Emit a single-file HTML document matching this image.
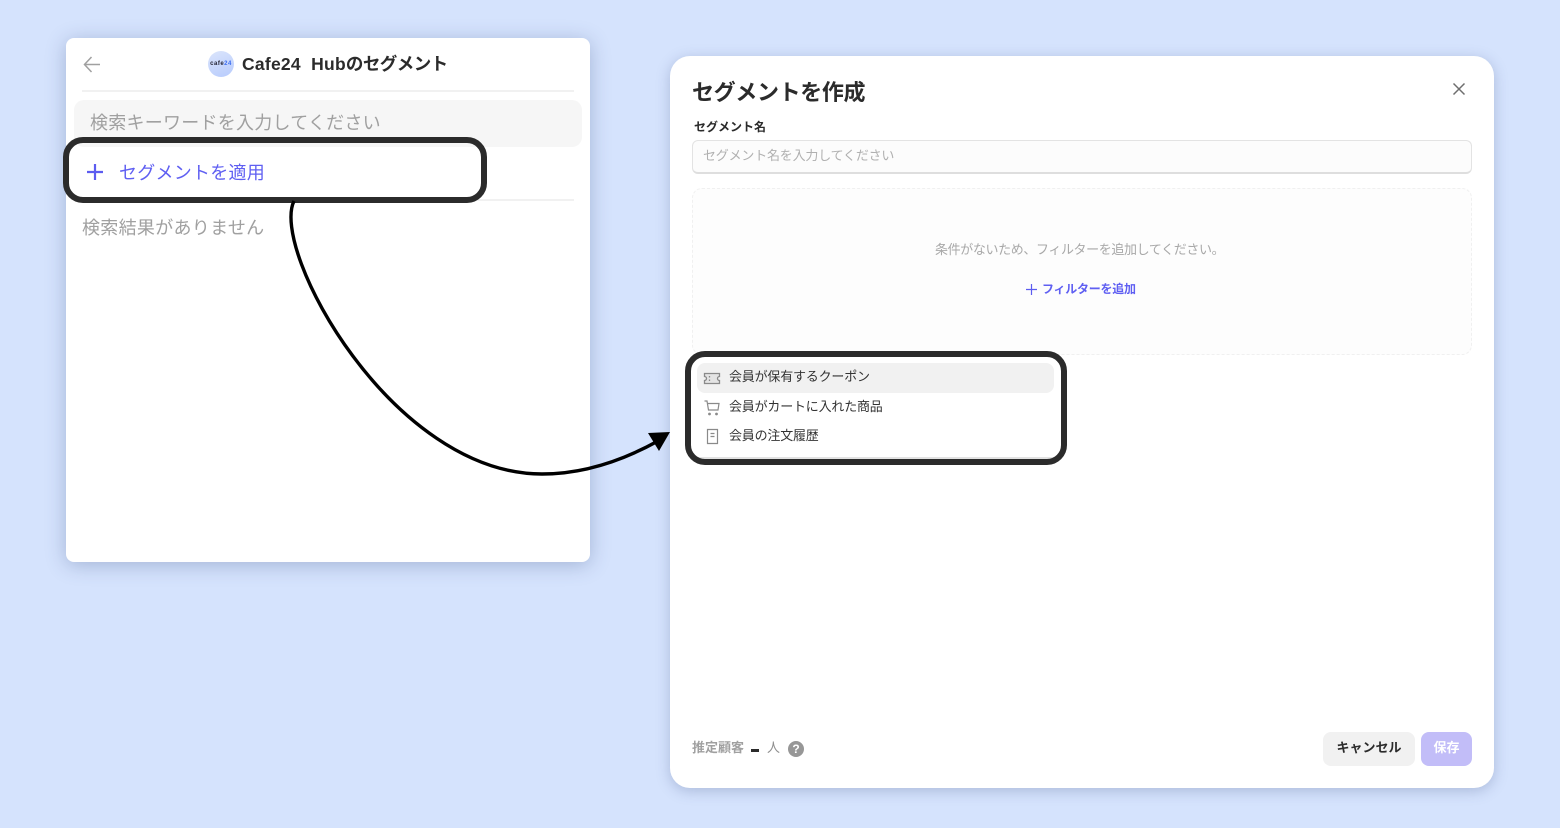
<!DOCTYPE html>
<html lang="ja"><head><meta charset="utf-8"><title>セグメント</title>
<style>
html,body{margin:0;padding:0}
body{width:1560px;height:828px;background:#d5e3fd;position:relative;overflow:hidden;font-family:"Liberation Sans","Noto Sans CJK JP",sans-serif}
.a{position:absolute;white-space:nowrap}
.card{position:absolute;background:#fff}
.hl{position:absolute;border:6px solid #2b2b2b;box-sizing:border-box}
svg{position:absolute;overflow:visible}
</style></head><body>
<div class="card" style="left:66px;top:38px;width:524px;height:524px;border-radius:8px;box-shadow:0 3px 20px rgba(60,80,130,.32)"></div>
<svg style="left:82px;top:54px" width="20" height="20" viewBox="0 0 20 20" fill="none" stroke="#a0a0a0" stroke-width="1.500"><path d="M18 10.500H2.500M9.500 3L2.500 10.500L9.500 18"/></svg>
<div class="a" style="left:208px;top:51px;width:26px;height:26px;border-radius:50%;background:linear-gradient(160deg,#dbe5fb,#b7cbfd)"></div>
<div class="a" style="left:209px;top:60px;width:24px;text-align:center;font-size:6px;line-height:8px;font-weight:700;color:#223;letter-spacing:.5px">cafe<span style="color:#3d6ef0">24</span></div>
<div class="a" style="left:242px;top:51px;font-size:17.500px;line-height:26px;font-weight:700;color:#2b2b2b"><span style="letter-spacing:.25px">Cafe24&nbsp; Hub</span><span style="letter-spacing:-.55px">のセグメント</span></div>
<div class="a" style="left:82px;top:90px;width:492px;height:2px;background:#f1f1f1"></div>
<div class="a" style="left:74px;top:100px;width:508px;height:47px;border-radius:10px;background:#f6f6f6"></div>
<div class="a" style="left:90px;top:110px;font-size:18px;line-height:26px;color:#a0a0a0;letter-spacing:.25px">検索キーワードを入力してください</div>
<div class="a" style="left:82px;top:199px;width:492px;height:2px;background:#f1f1f1"></div>
<svg style="left:87px;top:164px" width="16" height="16" viewBox="0 0 16 16" stroke="#5c5cf0" stroke-width="2.200"><path d="M0 8h16M8 0v16"/></svg>
<div class="a" style="left:119px;top:160px;font-size:18px;line-height:26px;color:#5f5ff2;letter-spacing:.25px">セグメントを適用</div>
<div class="a" style="left:82px;top:215px;font-size:18px;line-height:26px;color:#a0a0a0;letter-spacing:.3px">検索結果がありません</div>
<div class="hl" style="left:63px;top:137px;width:424px;height:66px;border-radius:20px"></div>

<div class="card" style="left:670px;top:56px;width:824px;height:732px;border-radius:20px;box-shadow:0 3px 14px rgba(60,80,130,.28)"></div>
<div class="a" style="left:692px;top:77px;font-size:22px;line-height:32px;font-weight:700;color:#2b2b2b;letter-spacing:-.35px">セグメントを作成</div>
<svg style="left:1453px;top:83px" width="12" height="12" viewBox="0 0 12 12" stroke="#6e6e6e" stroke-width="1.500"><path d="M.5.500l11 11M11.500.500l-11 11"/></svg>
<div class="a" style="left:694px;top:118px;font-size:12px;line-height:18px;font-weight:700;color:#2b2b2b">セグメント名</div>
<div class="a" style="left:692px;top:140px;width:780px;height:34px;box-sizing:border-box;border:1px solid #e3e3e3;border-bottom:2px solid #dedede;border-radius:6px;background:#fcfcfc"></div>
<div class="a" style="left:703px;top:147px;font-size:13px;line-height:18px;color:#b0b0b0;letter-spacing:-.2px">セグメント名を入力してください</div>
<div class="a" style="left:692px;top:188px;width:780px;height:167px;box-sizing:border-box;border:1px dashed #f0f0f0;border-radius:10px;background:#fdfdfd"></div>
<div class="a" style="left:935px;top:241px;font-size:13px;line-height:18px;color:#a8a8a8;letter-spacing:-.38px">条件がないため、フィルターを追加してください。</div>
<svg style="left:1026px;top:284px" width="11" height="11" viewBox="0 0 11 11" stroke="#5c5cf0" stroke-width="1.200"><path d="M0 5.500h11M5.500 0v11"/></svg>
<div class="a" style="left:1042px;top:280px;font-size:12px;line-height:18px;font-weight:700;color:#5f5ff2;letter-spacing:-.25px">フィルターを追加</div>

<div class="a" style="left:697px;top:363px;width:357px;height:30px;border-radius:8px;background:#f1f1f1"></div>
<svg style="left:704px;top:372px" width="16" height="13" viewBox="0 0 16 13" fill="#e4e4e4" stroke="#8a8a8a" stroke-width="1.300"><path d="M.5 1.500h15v3a2 2 0 0 0 0 4v3H.5v-3a2 2 0 0 0 0-4zM5.500 4v1.500M5.500 7.500v1.500"/></svg>
<svg style="left:704px;top:400px" width="16" height="16" viewBox="0 0 16 16" fill="none" stroke="#8a8a8a" stroke-width="1.200"><path d="M.5 1H3l1.500 9h9.500l1-6.500H3.500"/><circle cx="5.500" cy="14" r=".8" fill="#8a8a8a"/><circle cx="12.500" cy="14" r=".8" fill="#8a8a8a"/></svg>
<svg style="left:706px;top:429px" width="13" height="15" viewBox="0 0 13 15" fill="none" stroke="#8a8a8a" stroke-width="1.200"><path d="M1.500.500h10v14h-10zM4.500 4.500h4M4.500 7.500h4"/></svg>
<div class="a" style="left:729px;top:368px;font-size:13px;line-height:18px;color:#333;letter-spacing:-.2px">会員が保有するクーポン</div>
<div class="a" style="left:729px;top:398px;font-size:13px;line-height:18px;color:#333;letter-spacing:-.2px">会員がカートに入れた商品</div>
<div class="a" style="left:729px;top:427px;font-size:13px;line-height:18px;color:#333;letter-spacing:-.2px">会員の注文履歴</div>
<div class="a" style="left:692px;top:457px;width:368px;height:2px;background:#e2e2e2"></div>
<div class="hl" style="left:685px;top:351px;width:382px;height:114px;border-radius:20px"></div>

<div class="a" style="left:692px;top:739px;font-size:13px;line-height:18px;font-weight:700;color:#a0a0a0">推定顧客</div>
<div class="a" style="left:751px;top:749px;width:8px;height:3px;background:#2b2b2b"></div>
<div class="a" style="left:767px;top:739px;font-size:13px;line-height:18px;color:#8e8e8e">人</div>
<div class="a" style="left:788px;top:741px;width:16px;height:16px;border-radius:50%;background:#979797;color:#fff;font-size:12px;line-height:16px;font-weight:700;text-align:center">?</div>
<div class="a" style="left:1323px;top:732px;width:92px;height:34px;border-radius:8px;background:#f1f1f1;color:#2b2b2b;font-size:13px;line-height:31px;font-weight:700;text-align:center">キャンセル</div>
<div class="a" style="left:1421px;top:732px;width:51px;height:34px;border-radius:8px;background:#c2bdf8;color:#fff;font-size:13px;line-height:31px;font-weight:700;text-align:center">保存</div>

<svg style="left:0;top:0" width="1560" height="828" viewBox="0 0 1560 828" fill="none">
<path d="M294 201C270 250 392 474 542 474C582 474 620 462 658 441" stroke="#000" stroke-width="3.400" stroke-linecap="butt" stroke-linejoin="round"/>
<path d="M648 433L670 432L659 451Z" fill="#000"/>
</svg>
</body></html>
